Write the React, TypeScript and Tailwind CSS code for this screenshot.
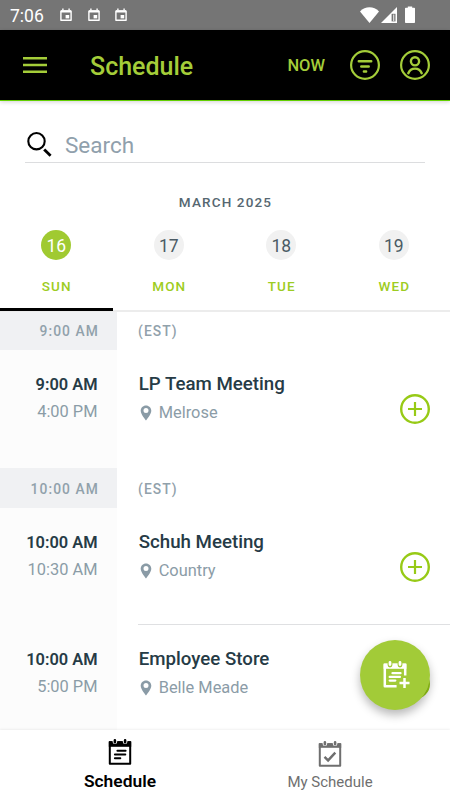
import React, { useState } from 'react';

const days = [
    { date: 16, label: 'SUN' },
    { date: 17, label: 'MON' },
    { date: 18, label: 'TUE' },
    { date: 19, label: 'WED' },
];

const groups = [
    {
        time: '9:00 AM',
        zone: '(EST)',
        events: [{ start: '9:00 AM', end: '4:00 PM', title: 'LP Team Meeting', place: 'Melrose' }],
    },
    {
        time: '10:00 AM',
        zone: '(EST)',
        events: [
            { start: '10:00 AM', end: '10:30 AM', title: 'Schuh Meeting', place: 'Country' },
            { start: '10:00 AM', end: '5:00 PM', title: 'Employee Store', place: 'Belle Meade' },
        ],
    },
];

const TrayCalendar = () => (
    <svg width="12" height="14" viewBox="0 0 12 14" fill="none">
        <path d="M0.9 3.2h10.2v9H0.9z" stroke="white" strokeWidth="1.4" strokeLinejoin="round" />
        <path d="M0.9 2.2h10.2v2.3H0.9z" fill="white" />
        <path d="M2.9 0.4v2M9.1 0.4v2" stroke="white" strokeWidth="1.4" />
        <path d="M5.6 7h3.6v3.4H5.6z" fill="white" />
    </svg>
);

const Pin = () => (
    <svg width="12" height="16" viewBox="0 0 12 16" className="-ml-px mr-[7px]">
        <path
            fillRule="evenodd"
            fill="#8a9ba6"
            d="M6 0.6C3 0.6 0.7 2.9 0.7 5.8c0 3.7 5.3 9.7 5.3 9.7s5.3-6 5.3-9.7C11.3 2.9 9 0.6 6 0.6zM6 3.1a2.5 2.5 0 1 1 0 5 2.5 2.5 0 0 1 0-5z"
        />
    </svg>
);

const AddButton = () => (
    <button className="mr-5 mt-[10px]">
        <svg width="30" height="30" viewBox="0 0 30 30" fill="none" stroke="#97ca16">
            <circle cx="15" cy="15" r="13.8" strokeWidth="2.4" />
            <path d="M15 8v14M8 15h14" strokeWidth="2.2" />
        </svg>
    </button>
);

const App = () => {
    const [selected, setSelected] = useState(16);

    return (
        <div className="flex h-[800px] w-[450px] flex-col overflow-hidden bg-white font-['Roboto',sans-serif]">
            {/* Status bar */}
            <div className="flex h-[30px] shrink-0 items-center bg-[#757575] pl-[10px] pr-[34px] text-white">
                <span className="w-[50px] text-[17.5px] leading-[30px] pt-[2px]">7:06</span>
                <div className="flex gap-[15.5px]">
                    <TrayCalendar />
                    <TrayCalendar />
                    <TrayCalendar />
                </div>
                <svg className="ml-auto" width="56" height="18" viewBox="0 0 56 18">
                    <path d="M0 5.4C5.2 -0.2 13.8 -0.2 19 5.4L9.5 17z" fill="white" />
                    <path d="M21 17L37 1v16z" fill="white" />
                    <path d="M31.6 7.8h3.9v7.6h-3.9z" fill="#757575" />
                    <path d="M33 8.5h1.3v6.5H33z" fill="#d8d8d8" />
                    <path d="M45 2.6q0-.8.8-.8h2V0.6h4.4v1.2h2q.8 0 .8.8v13.6q0 .8-.8.8h-8.4q-.8 0-.8-.8z" fill="white" />
                </svg>
            </div>

            {/* App bar */}
            <div className="relative flex h-[71px] shrink-0 items-center border-b border-[#62d000] bg-black pl-[23px] pr-5 text-[#a4cd39] shadow-[0_1px_4px_rgba(0,0,0,0.18)]">
                <svg width="24" height="16" viewBox="0 0 24 16" fill="currentColor">
                    <path d="M0 0h24v2.4H0zM0 6.8h24v2.4H0zM0 13.6h24V16H0z" />
                </svg>
                <h1 className="ml-[43px] pt-[4px] text-[25px] font-medium leading-[30px]">Schedule</h1>
                <span className="ml-auto pt-[3px] text-[16.5px] font-medium">NOW</span>
                <svg className="ml-[25px]" width="30" height="30" viewBox="0 0 30 30" fill="none" stroke="currentColor" strokeLinecap="round">
                    <circle cx="15" cy="15" r="13.9" strokeWidth="2.2" />
                    <path d="M8.8 11.3h12.4M11.3 16.4h7.4M13.9 21.4h2.2" strokeWidth="2.5" />
                </svg>
                <svg className="ml-5" width="30" height="30" viewBox="0 0 30 30" fill="none" stroke="currentColor" strokeLinecap="round">
                    <circle cx="15" cy="15" r="13.9" strokeWidth="2.2" />
                    <circle cx="15" cy="11.3" r="4.1" strokeWidth="2.4" />
                    <path d="M8.3 23.2c1.2-3 3.7-4.6 6.7-4.6s5.5 1.6 6.7 4.6" strokeWidth="2.4" />
                </svg>
            </div>

            {/* Search */}
            <div className="mx-[25px] mt-[24px] flex h-[38px] shrink-0 items-center border-b border-[#dcdddf]">
                <svg width="27" height="27" viewBox="0 0 27 27" fill="none" stroke="black" className="mt-[1px]">
                    <circle cx="11.5" cy="10.2" r="8.2" strokeWidth="2.1" />
                    <path d="M19.2 18.4l6.4 6.4" strokeWidth="2.8" />
                </svg>
                <input
                    type="text"
                    placeholder="Search"
                    className="ml-[13px] mt-[2px] w-[300px] text-[22.5px] leading-[28px] outline-none placeholder:text-[#90a0ac] placeholder:opacity-100"
                />
            </div>

            {/* Day picker */}
            <div className="shrink-0 pb-px pl-px pt-[29px] text-center text-[13.5px] font-medium leading-[20px] tracking-[1.15px] text-[#566771]">
                MARCH 2025
            </div>
            <div className="relative flex h-[99px] shrink-0 border-b-2 border-[#ececec]">
                {days.map((day) => (
                    <button
                        key={day.date}
                        onClick={() => setSelected(day.date)}
                        className={`-mb-px flex w-1/4 flex-col items-center border-b-[3px] pt-[17px] ${
                            selected === day.date ? 'border-black' : 'border-transparent'
                        }`}
                    >
                        <span
                            className={`h-[30px] w-[30px] rounded-full text-[17.5px] leading-[32px] ${
                                selected === day.date ? 'bg-[#a0ca31] text-white' : 'bg-[#f1f1f1] text-[#4b5b64]'
                            }`}
                        >
                            {day.date}
                        </span>
                        <span className="mt-[16px] pl-px text-[13.5px] font-medium leading-[20px] tracking-[1.1px] text-[#9dcc22]">
                            {day.label}
                        </span>
                    </button>
                ))}
            </div>

            {/* Agenda */}
            <div className="-mt-[2px] min-h-0 flex-1 overflow-hidden">
                {groups.map((group) => (
                    <div key={group.time}>
                        <div className="flex h-[40px] text-[13.8px] font-medium leading-[42px] tracking-[1.1px] text-[#91a1ab]">
                            <div className="w-[117px] bg-[#f0f1f3] pr-[18px] text-right">{group.time}</div>
                            <div className="pl-[21px]">{group.zone}</div>
                        </div>
                        {group.events.map((event, index) => (
                            <div key={event.title} className={`flex ${index < group.events.length - 1 ? 'h-[117px]' : 'h-[118px]'}`}>
                                <div className="w-[117px] bg-[#fcfcfc] pr-[19.5px] pt-[21px] text-right text-[16.4px] leading-[27px]">
                                    <div className="font-semibold text-[#263b46]">{event.start}</div>
                                    <div className="text-[#8b9ca7]">{event.end}</div>
                                </div>
                                <div
                                    className={`ml-[21px] flex flex-1 items-center border-b pb-[9px] ${
                                        index < group.events.length - 1 ? 'border-[#dfe0e2]' : 'border-transparent'
                                    }`}
                                >
                                    <div className="flex-1 self-start pl-[0.7px] pt-[21px]">
                                        <div className="text-[18.7px] font-medium leading-[27px] text-[#263b46]">{event.title}</div>
                                        <div className="flex items-center pl-[2px] text-[16.4px] leading-[30px] text-[#8b9ca7]">
                                            <Pin />
                                            {event.place}
                                        </div>
                                    </div>
                                    <AddButton />
                                </div>
                            </div>
                        ))}
                    </div>
                ))}
            </div>

            {/* Floating action button */}
            <button className="absolute left-[360px] top-[640px] flex h-[70px] w-[70px] items-center justify-center rounded-full bg-[#a2cb38] shadow-[0_5px_10px_rgba(0,0,0,0.28)]">
                <svg className="ml-[2px]" width="28" height="30" viewBox="0 0 28 30" fill="none" stroke="white">
                    <path d="M23.2 15.5V4.8H2.8v21.4H14.6" strokeWidth="2.5" strokeLinejoin="round" />
                    <path d="M1.6 3.6h22.8v5.2H1.6z" fill="white" stroke="none" />
                    <path d="M8 2v3M18 2v3" stroke="#a2cb38" strokeWidth="4.8" strokeLinecap="round" />
                    <path d="M8 2.4v2.2M18 2.4v2.2" strokeWidth="2.8" strokeLinecap="round" />
                    <path d="M10.5 13.2h8M7.7 16.9h10.2M7.7 20.6h5.6" strokeWidth="2.3" strokeLinecap="round" />
                    <path d="M22.5 18v10M17.5 23h10" strokeWidth="2.5" />
                </svg>
            </button>

            {/* Bottom navigation */}
            <div className="relative flex h-[70px] shrink-0 justify-center bg-white shadow-[0_-1px_2px_rgba(0,0,0,0.06)]">
                <button className="flex w-[210px] flex-col items-center pt-[8px] text-black">
                    <svg width="24" height="28" viewBox="0 0 24 28" fill="none" stroke="currentColor">
                        <path d="M1.8 4.3h20.4v21.4H1.8z" strokeWidth="2" strokeLinejoin="round" />
                        <path d="M0.8 3.2h22.4v5.6H0.8z" fill="currentColor" stroke="none" />
                        <path d="M6.9 1.8v2M17.1 1.8v2" stroke="white" strokeWidth="4.6" strokeLinecap="round" />
                        <path d="M6.9 2.4v1.8M17.1 2.4v1.8" strokeWidth="2.6" strokeLinecap="round" />
                        <path d="M9.4 12.8h8.2M6.9 16.5h10.4M6.9 20.2h5.4" strokeWidth="2" strokeLinecap="round" />
                    </svg>
                    <span className="mt-[4px] text-[17.4px] font-semibold leading-[22px]">Schedule</span>
                </button>
                <button className="flex w-[210px] flex-col items-center pt-[10px] text-[#6f6f6f]">
                    <svg width="24" height="28" viewBox="0 0 24 28" fill="none" stroke="currentColor">
                        <path d="M1.8 4.3h20.4v21.4H1.8z" strokeWidth="2" strokeLinejoin="round" />
                        <path d="M0.8 3.2h22.4v4.6H0.8z" fill="currentColor" stroke="none" />
                        <path d="M6.9 1.8v2M17.1 1.8v2" stroke="white" strokeWidth="4.6" strokeLinecap="round" />
                        <path d="M6.9 2.4v1.8M17.1 2.4v1.8" strokeWidth="2.6" strokeLinecap="round" />
                        <path d="M6.5 16.8l3.6 3.6 7.2-7.8" strokeWidth="2.4" />
                    </svg>
                    <span className="mt-[3px] text-[15px] leading-[22px]">My Schedule</span>
                </button>
            </div>
        </div>
    );
};

export default App;
